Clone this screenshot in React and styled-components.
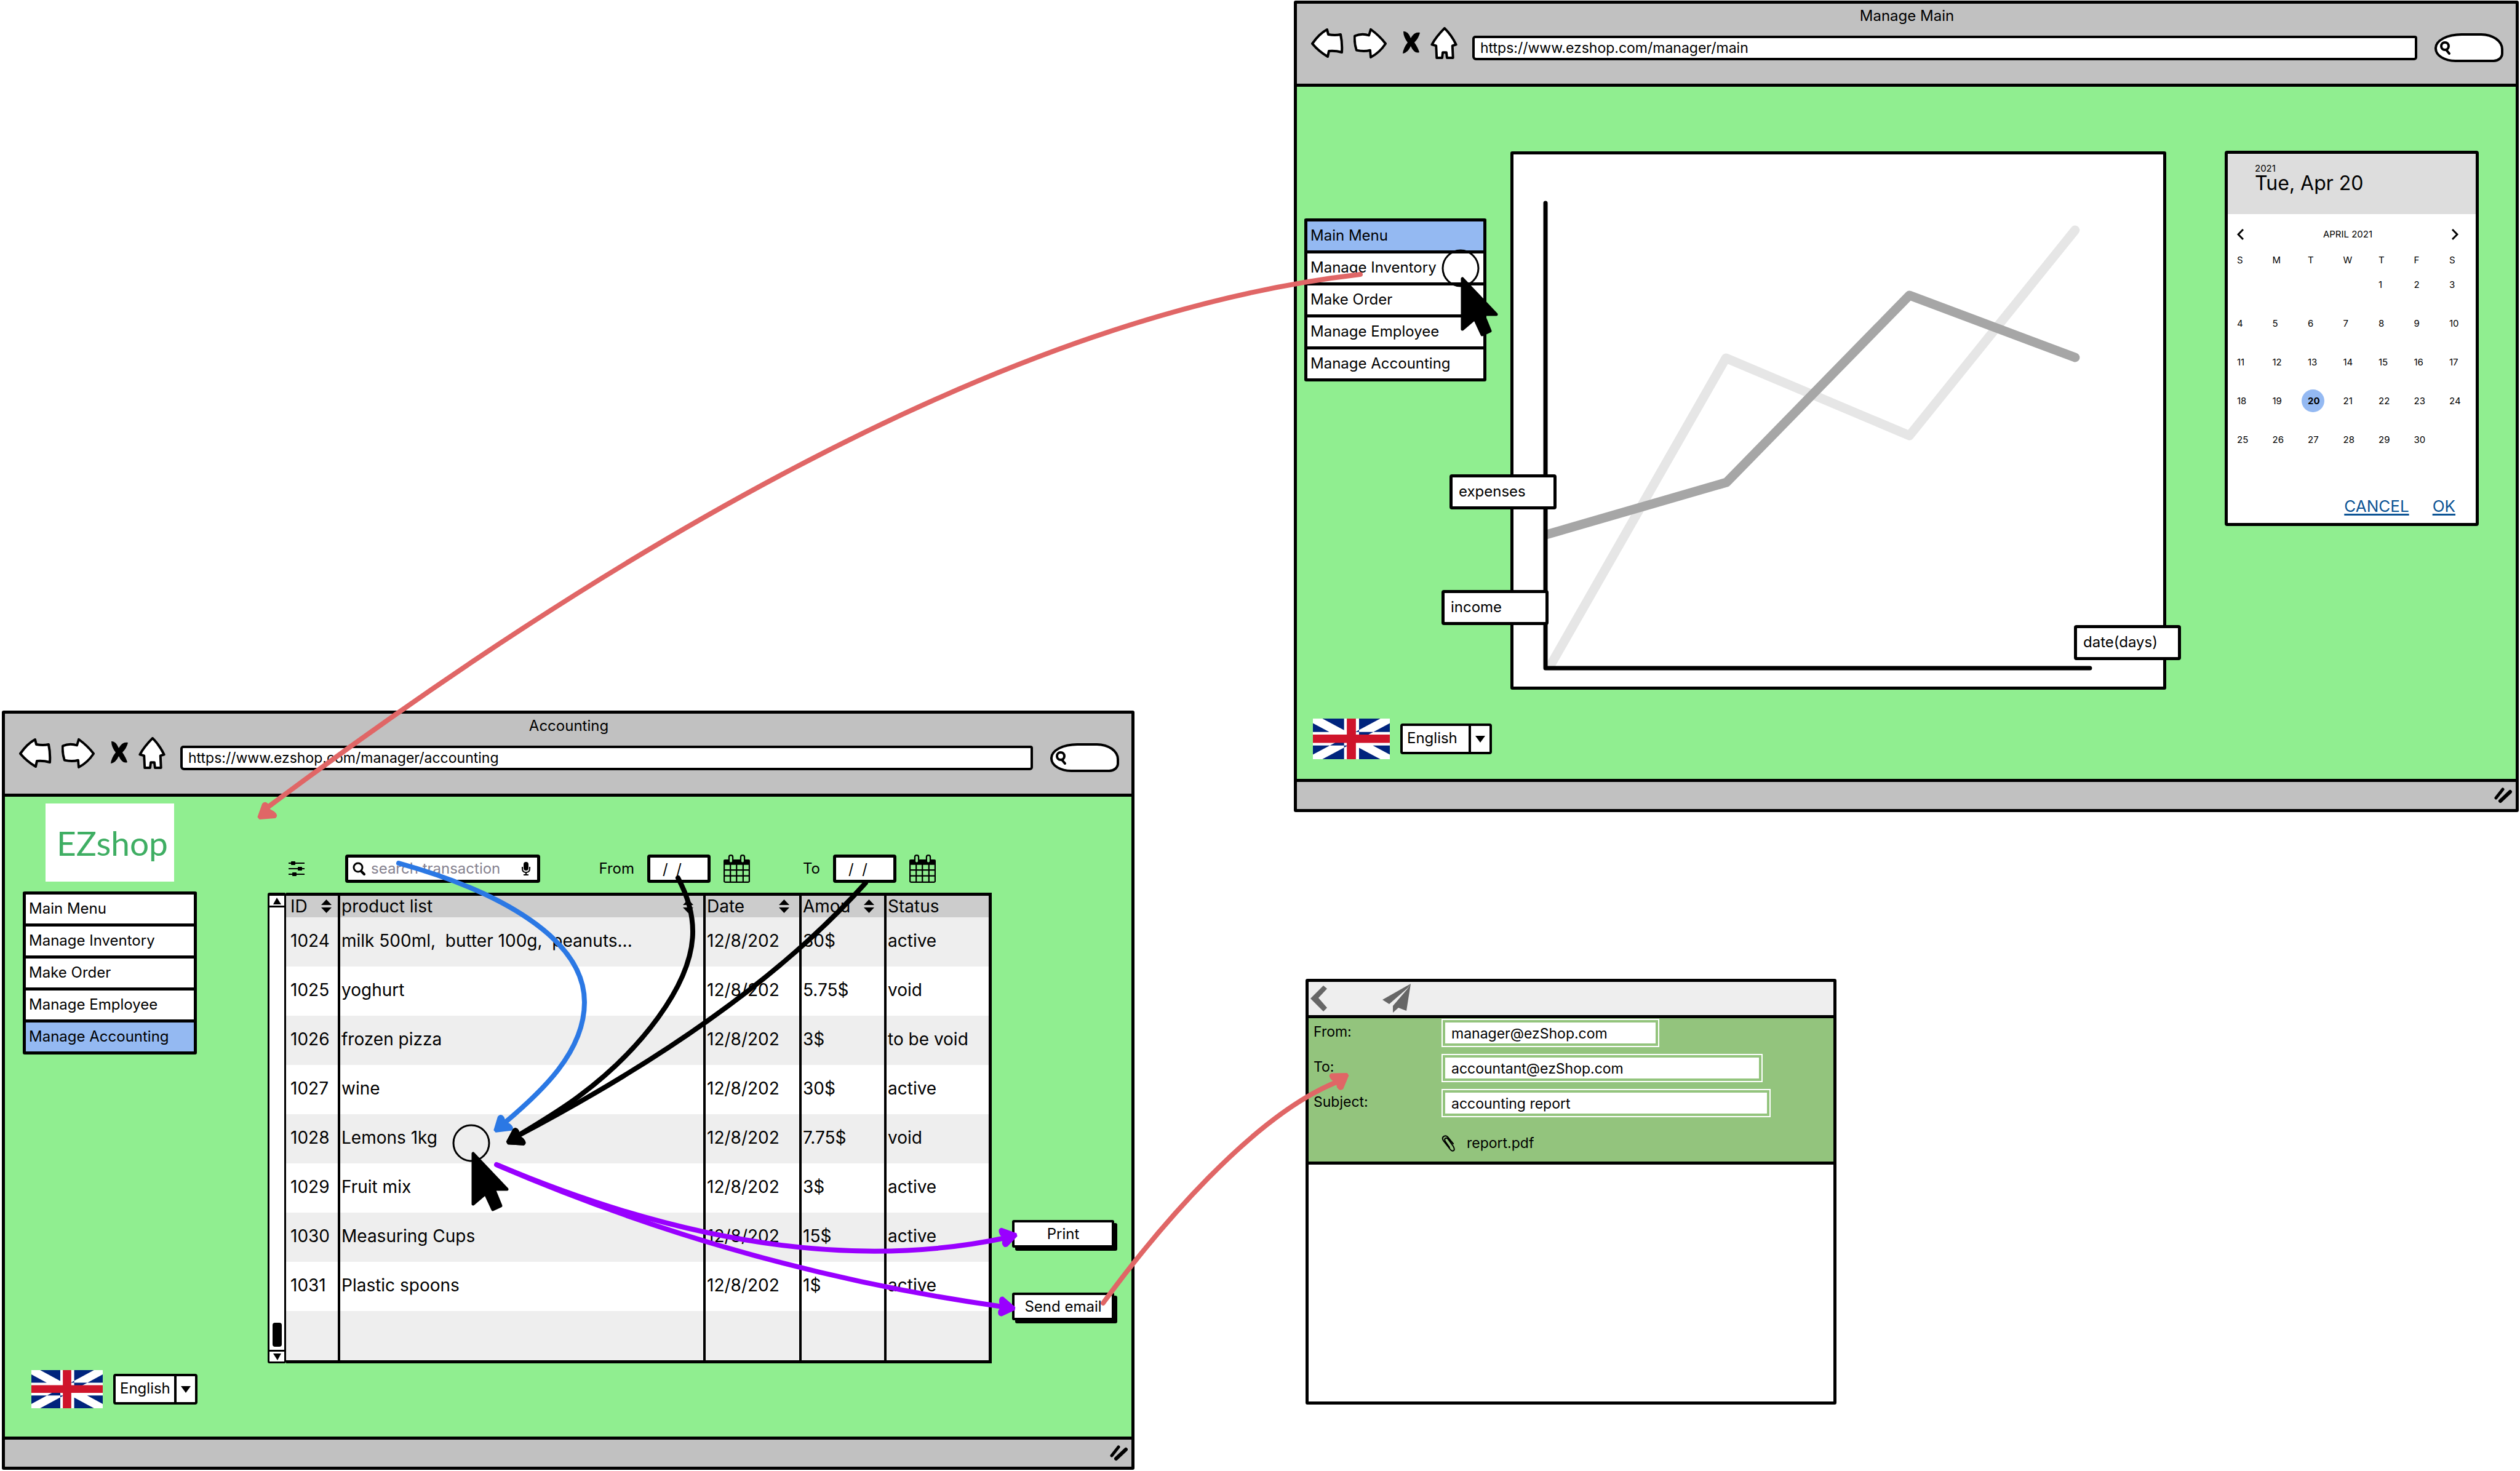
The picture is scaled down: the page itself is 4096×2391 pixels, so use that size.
import React from "react";
import styled, { createGlobalStyle } from "styled-components";

const INK = "#000000";
const MINT = "#90ee90";
const CHROME = "#c1c1c1";
const BLUE = "#94b9f2";
const RED = "#e06666";
const MAIL_GREEN = "#93c47d";

const GlobalStyle = createGlobalStyle`
  *, *::before, *::after { box-sizing: border-box; }
  body {
    margin: 0;
    background: #ffffff;
    color: ${INK};
    font-family: Inter, "Liberation Sans", sans-serif;
    font-size: 24px;
    line-height: 32px;
  }
  button, input, select, textarea { font: inherit; color: inherit; margin: 0; }
  svg { display: block; }
`;

/* ---------- board ---------- */

const Board = styled.main`
  position: relative;
  display: flex;
  align-items: flex-start;
  gap: 259px;
  padding: 1px 2px 0 3px;
  min-height: 100vh;
  overflow: hidden;
`;

const Column = styled.div`
  flex: ${(p) => p.$grow} 1 0;
  min-width: 0;
  padding-top: ${(p) => p.$top}px;
`;

const Annotations = styled.svg`
  position: absolute;
  top: 0;
  left: 0;
  width: 100%;
  height: auto;
  pointer-events: none;
`;

/* ---------- browser window ---------- */

const WindowFrame = styled.section`
  display: flex;
  flex-direction: column;
  border: 5px solid ${INK};
  border-radius: 3px;
  background: ${MINT};
`;

const WindowHeader = styled.header`
  background: ${CHROME};
  border-bottom: 5px solid ${INK};
  padding: 2px 20px 35px 22px;
`;

const WindowTitle = styled.h1`
  margin: 0;
  font-size: 24px;
  font-weight: 400;
  line-height: 36px;
  text-align: center;
`;

const Toolbar = styled.div`
  display: flex;
  align-items: flex-end;
  height: 57px;
`;

const NavButtons = styled.nav`
  display: flex;
  gap: 16px;
  align-self: flex-start;
  margin-right: 24px;
`;

const IconButton = styled.button`
  display: flex;
  align-items: center;
  justify-content: center;
  padding: 0;
  border: 0;
  background: none;
`;

const AddressInput = styled.input`
  flex: 1;
  min-width: 0;
  height: 40px;
  margin-bottom: 3px;
  padding: 0 9px;
  border: 4px solid ${INK};
  border-radius: 5px 4px 5px 6px;
  background: #ffffff;
  font-size: 23px;
`;

const SearchPill = styled.label`
  display: flex;
  align-items: center;
  width: 112px;
  height: 47px;
  margin-left: 28px;
  padding-left: 4px;
  border: 4px solid ${INK};
  border-radius: 44px 36px 16px 34px / 24px 26px 14px 22px;
  background: #ffffff;
`;

const PillInput = styled.input`
  width: 70px;
  border: 0;
  padding: 0 4px;
  background: transparent;
`;

const WindowBody = styled.div`
  display: flex;
  align-items: stretch;
  padding: ${(p) => p.$pad};
`;

const WindowFooter = styled.footer`
  display: flex;
  justify-content: flex-end;
  align-items: center;
  height: 49px;
  padding-right: 5px;
  border-top: 5px solid ${INK};
  background: ${CHROME};
`;

const icon = { fill: "#fff", stroke: "#000", strokeWidth: 4, strokeLinejoin: "round", strokeLinecap: "round" };

function BrowserWindow({ title, url, children }) {
  return (
    <WindowFrame>
      <WindowHeader>
        <WindowTitle>{title}</WindowTitle>
        <Toolbar>
          <NavButtons aria-label="Browser">
            <IconButton aria-label="Back">
              <svg width="54" height="52" viewBox="0 0 54 52">
                <path {...icon} d="M3 27 Q14 11 27 4 L29 12 Q40 14 49 12 Q52 26 51 41 Q40 38 30 39 L28 48 Q14 40 3 27Z" />
              </svg>
            </IconButton>
            <IconButton aria-label="Forward">
              <svg width="55" height="52" viewBox="0 0 57 52">
                <path {...icon} d="M2 14 Q14 9 26 13 L29 3 Q44 14 54 27 Q44 42 29 50 L28 38 Q18 41 5 38 Q1 26 2 14Z" />
              </svg>
            </IconButton>
            <IconButton aria-label="Stop">
              <svg width="38" height="52" viewBox="-1 0 38 52">
                <path d="M9 7 Q16 6 21 18 Q27 7 36 9 Q34 18 27 25 Q33 34 35 41 Q27 44 21 31 Q16 42 8 43 Q9 34 16 25 Q9 16 9 7Z" />
              </svg>
            </IconButton>
            <IconButton aria-label="Home">
              <svg width="44" height="52" viewBox="0 0 44 53">
                <path {...icon} d="M23 2 Q35 14 42 29 L36 31 L37 51 L27 51 L26 42 L20 42 L19 51 L10 51 L9 31 L2 29 Q9 16 23 2Z" />
              </svg>
            </IconButton>
          </NavButtons>
          <AddressInput aria-label="Address" defaultValue={url} />
          <SearchPill>
            <svg width="20" height="24" viewBox="0 0 20 24" fill="none" stroke="#000" strokeWidth="4" strokeLinecap="round">
              <circle cx="9" cy="9" r="6" />
              <path d="M11 15 L16 21" />
            </svg>
            <PillInput aria-label="Web search" />
          </SearchPill>
        </Toolbar>
      </WindowHeader>
      {children}
      <WindowFooter>
        <svg width="30" height="26" viewBox="0 0 30 26" stroke="#000" strokeLinecap="round">
          <path d="M3 17 L14 3" strokeWidth="5" />
          <path d="M10 22 L26 7" strokeWidth="6" />
        </svg>
      </WindowFooter>
    </WindowFrame>
  );
}

/* ---------- side menu ---------- */

const Sidebar = styled.aside`
  display: flex;
  flex-direction: column;
  flex: none;
  width: ${(p) => p.$width}px;
  padding: ${(p) => p.$pad};
`;

const Logo = styled.div`
  display: flex;
  align-items: center;
  width: 209px;
  height: 127px;
  margin: 0 0 16px 37px;
  padding-left: 18px;
  background: #ffffff;
  color: #3fae63;
  font-family: Lato, "Liberation Sans", sans-serif;
  font-size: 55px;
`;

const Menu = styled.ul`
  margin: 0;
  padding: 0;
  list-style: none;
  border: 5px solid ${INK};
  border-bottom-width: 0;
  border-radius: 3px;
`;

const MenuItem = styled.li`
  height: 52px;
  border-bottom: 5px solid ${INK};
  background: ${(p) => (p.$active ? BLUE : "#ffffff")};
`;

const MenuLink = styled.a`
  display: block;
  padding: 0 5px;
  line-height: 46px;
  color: inherit;
  text-decoration: none;
`;

const PAGES = ["Main Menu", "Manage Inventory", "Make Order", "Manage Employee", "Manage Accounting"];

function PageMenu({ active }) {
  return (
    <Menu>
      {PAGES.map((page) => (
        <MenuItem key={page} $active={page === active}>
          <MenuLink href={"#" + page.toLowerCase().replace(" ", "-")}>{page}</MenuLink>
        </MenuItem>
      ))}
    </Menu>
  );
}

const LanguageRow = styled.div`
  display: flex;
  align-items: center;
  gap: 17px;
  margin: auto 0 0 14px;
`;

const FlagSvg = styled.svg`
  flex: none;
  width: ${(p) => p.$w}px;
  height: ${(p) => p.$h}px;
`;

const SelectBox = styled.div`
  position: relative;
  flex: none;
  width: ${(p) => p.$w}px;
  height: 50px;
  border: 4px solid ${INK};
  border-radius: 4px;
  background: #ffffff;
`;

const LanguageSelect = styled.select`
  appearance: none;
  width: 100%;
  height: 100%;
  padding: 0 0 2px 7px;
  border: 0;
  background: transparent;
`;

const SelectArrow = styled.span`
  position: absolute;
  top: 0;
  right: 0;
  bottom: 0;
  display: flex;
  align-items: center;
  justify-content: center;
  width: 34px;
  border-left: 4px solid ${INK};
  pointer-events: none;
`;

function Language({ flagW, flagH, selectW }) {
  return (
    <LanguageRow>
      <FlagSvg $w={flagW} $h={flagH} viewBox="0 0 195 152" preserveAspectRatio="none" role="img" aria-label="United Kingdom">
        <rect width="195" height="152" fill="#00247d" />
        <path fill="#fff" d="M0 0H24L195 135V152H171L0 17Z M195 0H171L0 135V152H24L195 17Z M79 0H117V152H79Z M0 50H195V101H0Z" />
        <path fill="#cf142b" d="M86 0H109V152H86Z M0 60H195V91H0Z" />
      </FlagSvg>
      <SelectBox $w={selectW}>
        <LanguageSelect aria-label="Language" defaultValue="English">
          <option>English</option>
        </LanguageSelect>
        <SelectArrow>
          <svg width="18" height="11" viewBox="0 0 18 11">
            <path d="M1 0H17L9 11Z" />
          </svg>
        </SelectArrow>
      </SelectBox>
    </LanguageRow>
  );
}

/* ---------- accounting ---------- */

const Content = styled.div`
  flex: 1;
  min-width: 0;
  padding: 94px 0 119px 115px;
`;

const Filters = styled.form`
  display: flex;
  align-items: center;
  height: 46px;
  margin-bottom: 16px;
  padding: 0 91px 0 34px;
`;

const SearchBox = styled.label`
  display: flex;
  align-items: center;
  flex: none;
  gap: 9px;
  width: 317px;
  height: 46px;
  margin-left: 66px;
  padding: 0 11px 0 7px;
  border: 5px solid ${INK};
  border-radius: 4px;
  background: #ffffff;
`;

const SearchInput = styled.input`
  flex: 1;
  min-width: 0;
  padding: 0;
  border: 0;
  background: transparent;
  &::placeholder { color: #86828f; opacity: 1; }
`;

const DateField = styled.div`
  display: flex;
  align-items: center;
  justify-content: flex-end;
  gap: 21px;
  flex: ${(p) => p.$flex};
`;

const DateInput = styled.input`
  width: 103px;
  height: 46px;
  padding: 0 20px;
  border: 5px solid ${INK};
  border-radius: 4px;
  background: #ffffff;
  white-space: pre;
`;

function CalendarIcon() {
  return (
    <svg width="43" height="46" viewBox="0 0 77 82">
      <path d="M0 17 Q0 14 4 14 H73 Q77 14 77 17 V30 H0Z" />
      <path
        d="M2 28V77Q2 80 5 80H72Q75 80 75 77V28 M20 28V80 M38 28V80 M57 28V80 M2 45H75 M2 62H75"
        fill="none"
        stroke="#000"
        strokeWidth="4"
      />
      <rect x="16" y="2" width="11" height="22" rx="5" fill={MINT} stroke="#000" strokeWidth="4" />
      <rect x="50" y="2" width="11" height="22" rx="5" fill={MINT} stroke="#000" strokeWidth="4" />
    </svg>
  );
}

const TableBox = styled.div`
  display: flex;
`;

const Scrollbar = styled.div`
  display: flex;
  flex-direction: column;
  align-items: center;
  flex: none;
  width: 30px;
  border: 3px solid ${INK};
  border-top-width: 5px;
  border-radius: 3px;
  background: #ffffff;
`;

const ScrollButton = styled.button`
  display: flex;
  align-items: center;
  justify-content: center;
  width: 24px;
  height: 19px;
  padding: 0;
  border: 0 solid ${INK};
  border-width: ${(p) => (p.$end ? "3px 0 0" : "0 0 3px")};
  background: #ffffff;
`;

const ScrollThumb = styled.div`
  width: 15px;
  height: 39px;
  margin: auto 0 5px;
  border-radius: 4px;
  background: ${INK};
`;

const TableFrame = styled.div`
  flex: 1;
  min-width: 0;
  border: 5px solid ${INK};
  border-left: 0;
  background: #ffffff;
`;

const Table = styled.table`
  width: 100%;
  table-layout: fixed;
  border-collapse: separate;
  border-spacing: 0;
  font-size: 28px;
`;

const Col = styled.col`
  width: ${(p) => p.$w};
`;

const HeadCell = styled.th`
  height: 35px;
  padding: 0 ${(p) => p.$right}px 1px ${(p) => (p.$first ? 7 : 2)}px;
  border-right: ${(p) => (p.$last ? 0 : 4)}px solid ${INK};
  background: #cccccc;
  font-weight: 400;
  line-height: 34px;
  text-align: left;
`;

const HeadContent = styled.div`
  display: flex;
  align-items: center;
  justify-content: space-between;
`;

const Row = styled.tr`
  background: ${(p) => (p.$shade ? "#eeeeee" : "#ffffff")};
`;

const Cell = styled.td`
  height: 80px;
  padding: 0 0 5px ${(p) => (p.$first ? 7 : 2)}px;
  border-right: ${(p) => (p.$last ? 0 : 4)}px solid ${INK};
  white-space: pre;
`;

function SortIcon() {
  return (
    <svg width="17" height="22" viewBox="0 0 34 44">
      <path d="M17 0L34 18H0Z M17 44L34 26H0Z" />
    </svg>
  );
}

const COLUMNS = [
  ["ID", 10],
  ["product list", 16],
  ["Date", 16],
  ["Amou", 16],
  ["Status", 0],
];

const ROWS = [
  ["1024", "milk 500ml,  butter 100g,  peanuts...", "12/8/202", "30$", "active"],
  ["1025", "yoghurt", "12/8/202", "5.75$", "void"],
  ["1026", "frozen pizza", "12/8/202", "3$", "to be void"],
  ["1027", "wine", "12/8/202", "30$", "active"],
  ["1028", "Lemons 1kg", "12/8/202", "7.75$", "void"],
  ["1029", "Fruit mix", "12/8/202", "3$", "active"],
  ["1030", "Measuring Cups", "12/8/202", "15$", "active"],
  ["1031", "Plastic spoons", "12/8/202", "1$", "active"],
  ["", "", "", "", ""],
];

const Actions = styled.div`
  display: flex;
  flex-direction: column;
  justify-content: flex-end;
  flex: none;
  gap: 73px;
  width: 199px;
  padding: 0 0 189px 33px;
`;

const ActionButton = styled.button`
  height: 45px;
  padding: 0;
  border: 4px solid ${INK};
  border-radius: 3px;
  background: #ffffff;
  box-shadow: 5px 5px 0 ${INK};
`;

function Accounting() {
  return (
    <BrowserWindow title="Accounting" url="https://www.ezshop.com/manager/accounting">
      <WindowBody $pad="0 28px 0 29px">
        <Sidebar $width={283} $pad="11px 0 46px">
          <Logo>EZshop</Logo>
          <PageMenu active="Manage Accounting" />
          <Language flagW={116} flagH={62} selectW={137} />
        </Sidebar>
        <Content>
          <Filters>
            <IconButton type="button" aria-label="Filters">
              <svg width="26" height="24" viewBox="0 0 26 24">
                <path d="M0 3H26M0 12H26M0 21H26" stroke="#000" strokeWidth="2" />
                <rect x="4" y="0" width="7" height="6" rx="1" />
                <rect x="15" y="9" width="7" height="6" rx="1" />
                <rect x="6" y="18" width="7" height="6" rx="1" />
              </svg>
            </IconButton>
            <SearchBox>
              <svg width="21" height="22" viewBox="0 0 21 22" fill="none" stroke="#000" strokeWidth="3" strokeLinecap="round">
                <circle cx="9" cy="9" r="7" />
                <path d="M14 15L19 20" strokeWidth="4" />
              </svg>
              <SearchInput aria-label="Search" placeholder="search transaction" />
              <svg width="14" height="22" viewBox="0 0 14 22">
                <rect x="3" y="0" width="8" height="14" rx="4" />
                <path d="M1 8V11Q1 17 7 17Q13 17 13 11V8M7 17V21M3 21H11" fill="none" stroke="#000" strokeWidth="2" />
              </svg>
            </SearchBox>
            <DateField $flex="1 1 0">
              <label htmlFor="from-date">From</label>
              <DateInput id="from-date" defaultValue="/  /" />
              <CalendarIcon />
            </DateField>
            <DateField $flex="0 0 302px">
              <label htmlFor="to-date">To</label>
              <DateInput id="to-date" defaultValue="/  /" />
              <CalendarIcon />
            </DateField>
          </Filters>
          <TableBox>
            <Scrollbar>
              <ScrollButton aria-label="Scroll up">
                <svg width="15" height="11" viewBox="0 0 15 11"><path d="M7 0L14 11H1Z" /></svg>
              </ScrollButton>
              <ScrollThumb />
              <ScrollButton $end aria-label="Scroll down">
                <svg width="15" height="11" viewBox="0 0 15 11"><path d="M1 0H14L8 11Z" /></svg>
              </ScrollButton>
            </Scrollbar>
            <TableFrame>
              <Table>
                <colgroup>
                  <Col $w="88px" />
                  <Col $w="auto" />
                  <Col $w="156px" />
                  <Col $w="138px" />
                  <Col $w="166px" />
                </colgroup>
                <thead>
                  <tr>
                    {COLUMNS.map(([label, right], i) => (
                      <HeadCell key={label} $right={right} $first={i === 0} $last={i === 4}>
                        <HeadContent>
                          <span>{label}</span>
                          {i < 4 && <SortIcon />}
                        </HeadContent>
                      </HeadCell>
                    ))}
                  </tr>
                </thead>
                <tbody>
                  {ROWS.map((row, r) => (
                    <Row key={r} $shade={r % 2 === 0}>
                      {row.map((value, c) => (
                        <Cell key={c} $first={c === 0} $last={c === 4}>
                          {value}
                        </Cell>
                      ))}
                    </Row>
                  ))}
                </tbody>
              </Table>
            </TableFrame>
          </TableBox>
        </Content>
        <Actions>
          <ActionButton>Print</ActionButton>
          <ActionButton>Send email</ActionButton>
        </Actions>
      </WindowBody>
    </BrowserWindow>
  );
}

/* ---------- main page ---------- */

const ChartPanel = styled.div`
  position: relative;
  flex: 1;
  min-width: 0;
  height: 875px;
  margin: 105px 95px 145px 39px;
  border: 5px solid ${INK};
  border-radius: 3px;
  background: #ffffff;
`;

const Plot = styled.svg`
  width: 100%;
  height: 100%;
`;

const ChartTag = styled.input`
  position: absolute;
  top: ${(p) => p.$top}px;
  left: ${(p) => p.$left};
  right: ${(p) => p.$right};
  width: 174px;
  height: 57px;
  padding: 0 10px 3px;
  border: 5px solid ${INK};
  border-radius: 4px;
  background: #ffffff;
`;

const DatePicker = styled.section`
  display: flex;
  flex-direction: column;
  flex: none;
  width: 413px;
  height: 610px;
  margin-top: 104px;
  border: 5px solid ${INK};
  border-radius: 4px;
  background: #ffffff;
  font-size: 15px;
  line-height: 16px;
`;

const PickedDate = styled.header`
  height: 98px;
  padding: 16px 0 0 44px;
  background: #dddddd;
`;

const PickedDay = styled.div`
  font-size: 32px;
  line-height: 32px;
`;

const MonthBar = styled.div`
  display: flex;
  align-items: center;
  justify-content: space-between;
  height: 66px;
  padding: 0 28px 0 15px;
`;

const Days = styled.table`
  width: 388px;
  margin-left: 15px;
  table-layout: fixed;
  border-collapse: collapse;
`;

const WeekDay = styled.th`
  height: 17px;
  padding: 0;
  font-weight: 400;
  text-align: left;
`;

const DayCell = styled.td`
  height: 63px;
  padding: 0;
`;

const DayButton = styled.button`
  display: block;
  width: 37px;
  height: 37px;
  margin-left: -10px;
  padding: 0 0 0 10px;
  border: 0;
  border-radius: 50%;
  background: ${(p) => (p.$picked ? BLUE : "transparent")};
  font-weight: ${(p) => (p.$picked ? 700 : 400)};
  line-height: 16px;
  text-align: left;
`;

const PickerActions = styled.div`
  display: flex;
  justify-content: flex-end;
  gap: 38px;
  margin-top: auto;
  padding: 0 33px 12px 0;
  font-size: 26px;
  line-height: 30px;
`;

const PickerLink = styled.a`
  color: #0b5394;
  text-decoration: underline;
  text-decoration-thickness: 3px;
  text-underline-offset: 3px;
`;

const WEEKS = [
  ["", "", "", "", 1, 2, 3],
  [4, 5, 6, 7, 8, 9, 10],
  [11, 12, 13, 14, 15, 16, 17],
  [18, 19, 20, 21, 22, 23, 24],
  [25, 26, 27, 28, 29, 30, ""],
];

const series = { fill: "none", strokeWidth: 15, strokeLinecap: "round", strokeLinejoin: "round" };

function ManageMain() {
  return (
    <BrowserWindow title="Manage Main" url="https://www.ezshop.com/manager/main">
      <WindowBody $pad="0 60px 0 12px">
        <Sidebar $width={296} $pad="214px 0 32px">
          <PageMenu active="Main Menu" />
          <Language flagW={125} flagH={66} selectW={149} />
        </Sidebar>
        <ChartPanel>
          <Plot viewBox="0 0 1055 865" preserveAspectRatio="none" role="img" aria-label="Income and expenses by date">
            <clipPath id="plot-area">
              <rect x="55" y="60" width="1000" height="772" />
            </clipPath>
            <g clipPath="url(#plot-area)">
              <path {...series} stroke="#e6e6e6" d="M54 841L345 331L643 457L912 123" />
              <path {...series} stroke="#a6a6a6" d="M50 619L346 533L643 229L912 330" />
            </g>
            <path d="M52 79V835H936" fill="none" stroke="#000" strokeWidth="7" strokeLinecap="round" strokeLinejoin="round" />
          </Plot>
          <ChartTag aria-label="First series" defaultValue="expenses" $top={520} $left="-104px" $right="auto" />
          <ChartTag aria-label="Second series" defaultValue="income" $top={708} $left="-117px" $right="auto" />
          <ChartTag aria-label="Axis" defaultValue="date(days)" $top={765} $left="auto" $right="-29px" />
        </ChartPanel>
        <DatePicker>
          <PickedDate>
            <div>2021</div>
            <PickedDay>Tue, Apr 20</PickedDay>
          </PickedDate>
          <MonthBar>
            <IconButton aria-label="Previous month">
              <svg width="11" height="18" viewBox="0 0 11 18" fill="none" stroke="#000" strokeWidth="3"><path d="M10 1L2 9L10 17" /></svg>
            </IconButton>
            <span>APRIL 2021</span>
            <IconButton aria-label="Next month">
              <svg width="11" height="18" viewBox="0 0 11 18" fill="none" stroke="#000" strokeWidth="3"><path d="M1 1L9 9L1 17" /></svg>
            </IconButton>
          </MonthBar>
          <Days>
            <colgroup>
              <Col span={6} $w="auto" />
              <Col $w="43px" />
            </colgroup>
            <thead>
              <tr>
                {["S", "M", "T", "W", "T", "F", "S"].map((d, i) => (
                  <WeekDay key={i}>{d}</WeekDay>
                ))}
              </tr>
            </thead>
            <tbody>
              {WEEKS.map((week, w) => (
                <tr key={w}>
                  {week.map((day, i) => (
                    <DayCell key={i}>{day && <DayButton $picked={day === 20}>{day}</DayButton>}</DayCell>
                  ))}
                </tr>
              ))}
            </tbody>
          </Days>
          <PickerActions>
            <PickerLink href="#cancel">CANCEL</PickerLink>
            <PickerLink href="#ok">OK</PickerLink>
          </PickerActions>
        </DatePicker>
      </WindowBody>
    </BrowserWindow>
  );
}

/* ---------- mail ---------- */

const MailFrame = styled.section`
  display: flex;
  flex-direction: column;
  width: 863px;
  height: 692px;
  margin: 271px 0 0 19px;
  border: 5px solid ${INK};
  border-radius: 3px;
`;

const MailBar = styled.header`
  display: flex;
  align-items: center;
  gap: 87px;
  height: 59px;
  padding-left: 2px;
  border-bottom: 5px solid ${INK};
  background: #eeeeee;
`;

const MailForm = styled.div`
  display: grid;
  grid-template-columns: 208px 1fr;
  gap: 11px 0;
  align-items: center;
  padding: 1px 0 12px 8px;
  border-bottom: 5px solid ${INK};
  background: ${MAIL_GREEN};
  font-size: 23px;
`;

const MailLabel = styled.label`
  padding-bottom: 4px;
`;

const MailInput = styled.input`
  width: ${(p) => p.$w}px;
  height: 42px;
  margin: 2px;
  padding: 2px 10px 0;
  border: 4px solid ${MAIL_GREEN};
  background: #ffffff;
  box-shadow: 0 0 0 2px #ffffff;
`;

const Attachment = styled.div`
  display: flex;
  align-items: center;
  grid-column: 2;
  gap: 17px;
  height: 36px;
  margin-top: 13px;
`;

const MailText = styled.textarea`
  display: block;
  flex: 1;
  width: 100%;
  padding: 10px;
  border: 0;
  resize: none;
  background: #ffffff;
`;

function Mail() {
  return (
    <MailFrame>
      <MailBar>
        <IconButton aria-label="Back">
          <svg width="29" height="44" viewBox="0 0 29 44"><path fill="#666" d="M22 1L28 6L14 21L28 37L22 43L1 22Z" /></svg>
        </IconButton>
        <IconButton aria-label="Send">
          <svg width="48" height="48" viewBox="0 0 48 48" fill="#666"><path d="M48 0L2 26L13 33L43 7Z M48 0L41 44L28 39L19 47L19 36L43 8Z" /></svg>
        </IconButton>
      </MailBar>
      <MailForm>
        <MailLabel htmlFor="mail-from">From:</MailLabel>
        <MailInput id="mail-from" $w={350} defaultValue="manager@ezShop.com" />
        <MailLabel htmlFor="mail-to">To:</MailLabel>
        <MailInput id="mail-to" $w={518} defaultValue="accountant@ezShop.com" />
        <MailLabel htmlFor="mail-subject">Subject:</MailLabel>
        <MailInput id="mail-subject" $w={531} defaultValue="accounting report" />
        <Attachment>
          <svg width="24" height="27" viewBox="0 0 24 27" fill="none" stroke="#000" strokeWidth="2" strokeLinecap="round">
            <path d="M13 20L6 10Q4 6 7 5Q9 4 11 7L19 18Q22 23 20 25Q17 27 14 23L3 9Q0 4 4 2Q7 0 10 3L19 14" />
          </svg>
          <span>report.pdf</span>
        </Attachment>
      </MailForm>
      <MailText aria-label="Message" />
    </MailFrame>
  );
}

/* ---------- arrows and cursors over the board ---------- */

const HEAD = "M-1 2L-20 14Q-26 15 -26 8L-23 0L-26 -7Q-28 -16 -22 -16L-1 -2Z";

function Arrow({ d, color, x, y, angle }) {
  return (
    <g>
      <path d={d} fill="none" stroke={color} strokeWidth="8" strokeLinecap="round" />
      <path
        d={HEAD}
        transform={`translate(${x} ${y}) rotate(${angle})`}
        fill={color}
        stroke={color}
        strokeWidth="2"
        strokeLinejoin="round"
      />
    </g>
  );
}

function Cursor({ x, y }) {
  return (
    <g transform={`translate(${x} ${y})`}>
      <circle cx="-3" cy="-17" r="29" fill="none" stroke="#000" strokeWidth="3" />
      <path d="M0 0V82L20 65L32 91L45 85L34 58H55Z" stroke="#000" strokeWidth="5" strokeLinejoin="round" />
    </g>
  );
}

export default function App() {
  return (
    <>
      <GlobalStyle />
      <Board>
        <Column $grow={1841} $top={1154}>
          <Accounting />
        </Column>
        <Column $grow={1991} $top={0}>
          <ManageMain />
          <Mail />
        </Column>
        <Annotations viewBox="0 0 4096 2391" aria-hidden="true">
          <Cursor x={769} y={1875} />
          <Cursor x={2377} y={453} />
          <Arrow color={RED} d="M2211 446Q1480 530 434 1313" x={420} y={1330} angle={142} />
          <Arrow color={RED} d="M1793 2118C1880 1999 2035 1815 2172 1759" x={2191} y={1746} angle={-35} />
          <Arrow color="#2b78e4" d="M648 1403C810 1448 950 1525 950 1629C950 1710 880 1775 818 1827" x={804} y={1839} angle={139} />
          <Arrow color="#000" d="M1102 1427C1117 1455 1126 1485 1126 1514C1126 1600 1040 1710 934 1787C905 1808 875 1826 840 1847" x={824} y={1858} angle={150} />
          <Arrow color="#000" d="M1407 1435Q1215 1650 840 1847" x={824} y={1858} angle={150} />
          <Arrow color="#9900ff" d="M807 1893C1060 2000 1350 2072 1635 2012" x={1653} y={2007} angle={-14} />
          <Arrow color="#9900ff" d="M809 1894Q1206 2065 1630 2124" x={1650} y={2127} angle={7} />
        </Annotations>
      </Board>
    </>
  );
}
